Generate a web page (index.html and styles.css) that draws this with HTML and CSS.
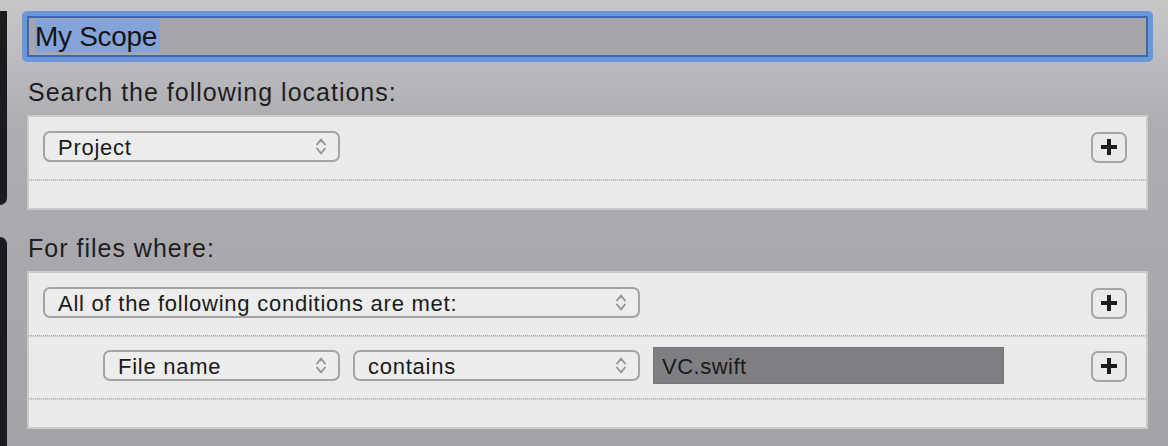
FILE: index.html
```html
<!DOCTYPE html>
<html lang="en">
<head>
<meta charset="utf-8">
<title>Scope</title>
<link rel="stylesheet" href="styles.css">
</head>
<body>
<div class="edge">
  <div class="edge-top"></div>
  <div class="edge-bottom"></div>
</div>
<main class="main">
  <div class="name-field">
    <div class="name-inner"><span class="sel">My Scope</span></div>
  </div>

  <div class="label label-first">Search the following locations:</div>
  <div class="box">
    <div class="row">
      <div class="popup popup-project">
        <span class="popup-text">Project</span>
        <svg class="chev" width="10" height="17" viewBox="0 0 10 17"><path d="M1 6.5 L5 1.6 L9 6.5 M1 10.5 L5 15.4 L9 10.5" fill="none" stroke="#959595" stroke-width="1.9" stroke-linecap="round" stroke-linejoin="round"/></svg>
      </div>
      <div class="spacer"></div>
      <div class="plus"><svg width="16" height="16" viewBox="0 0 16 16"><path d="M8 0V16M0 8H16" stroke="#1d1d1d" stroke-width="4"/></svg></div>
    </div>
    <div class="row-empty"></div>
  </div>

  <div class="label label-second">For files where:</div>
  <div class="box">
    <div class="row">
      <div class="popup popup-all">
        <span class="popup-text">All of the following conditions are met:</span>
        <svg class="chev" width="10" height="17" viewBox="0 0 10 17"><path d="M1 6.5 L5 1.6 L9 6.5 M1 10.5 L5 15.4 L9 10.5" fill="none" stroke="#959595" stroke-width="1.9" stroke-linecap="round" stroke-linejoin="round"/></svg>
      </div>
      <div class="spacer"></div>
      <div class="plus"><svg width="16" height="16" viewBox="0 0 16 16"><path d="M8 0V16M0 8H16" stroke="#1d1d1d" stroke-width="4"/></svg></div>
    </div>
    <div class="row row-indent">
      <div class="popup popup-file">
        <span class="popup-text">File name</span>
        <svg class="chev" width="10" height="17" viewBox="0 0 10 17"><path d="M1 6.5 L5 1.6 L9 6.5 M1 10.5 L5 15.4 L9 10.5" fill="none" stroke="#959595" stroke-width="1.9" stroke-linecap="round" stroke-linejoin="round"/></svg>
      </div>
      <div class="popup popup-contains">
        <span class="popup-text">contains</span>
        <svg class="chev" width="10" height="17" viewBox="0 0 10 17"><path d="M1 6.5 L5 1.6 L9 6.5 M1 10.5 L5 15.4 L9 10.5" fill="none" stroke="#959595" stroke-width="1.9" stroke-linecap="round" stroke-linejoin="round"/></svg>
      </div>
      <div class="text-field">VC.swift</div>
      <div class="spacer"></div>
      <div class="plus"><svg width="16" height="16" viewBox="0 0 16 16"><path d="M8 0V16M0 8H16" stroke="#1d1d1d" stroke-width="4"/></svg></div>
    </div>
    <div class="row-empty"></div>
  </div>
</main>
</body>
</html>
```

FILE: styles.css
```css
html, body {
  margin: 0;
  padding: 0;
  height: 446px;
  overflow: hidden;
}

body {
  display: flex;
  font-family: "Liberation Sans", Arial, sans-serif;
  color: #1c1c1c;
  background: linear-gradient(to bottom, #c7c7c9 0px, #bcbbbf 60px, #aeadb2 120px, #a9a8ad 260px, #a4a3a8 446px);
}

.edge {
  width: 7px;
  flex: none;
  display: flex;
  flex-direction: column;
  padding-top: 11px;
  gap: 32px;
}

.edge-top {
  height: 194px;
  background: #1c1c1e;
  border-bottom-right-radius: 7px;
}

.edge-bottom {
  flex: 1;
  background: #1c1c1e;
  border-top-right-radius: 8px;
}

.main {
  flex: 1;
  padding: 0 15px 0 15px;
  display: flex;
  flex-direction: column;
}

.name-field {
  margin-top: 11px;
  border: 5px solid #6a96da;
  border-radius: 5px;
  box-sizing: border-box;
  height: 51px;
}

.name-inner {
  height: 100%;
  box-sizing: border-box;
  border: 2px solid #3d67b5;
  background: #a6a5aa;
  padding: 1px 0 0 6px;
}

.sel {
  display: inline-block;
  background: #85a3d8;
  font-size: 28px;
  line-height: 31px;
  padding-top: 2px;
  letter-spacing: -0.3px;
  color: #151515;
  padding-right: 3px;
}

.label {
  font-size: 25px;
  line-height: 30px;
  letter-spacing: 1px;
  padding-left: 6px;
  color: #1e1e1e;
  margin-bottom: 8px;
}

.label-first {
  margin-top: 15px;
}

.label-second {
  margin-top: 23px;
}

.box {
  margin-left: 5px;
  margin-right: 5px;
  border: 2px solid #cbcbcc;
  background: #ebebeb;
  display: flex;
  flex-direction: column;
}

.row {
  height: 63px;
  box-sizing: border-box;
  display: flex;
  align-items: center;
  padding: 0 19px 3px 14px;
  gap: 13px;
  border-bottom: 1px dotted #a9a9a9;
  box-shadow: 0 1px 0 #d3d3d3;
}

.row-indent {
  padding-left: 74px;
}

.row-empty {
  height: 28px;
}

.spacer {
  flex: 1;
}

.popup {
  height: 31px;
  box-sizing: border-box;
  border: 2px solid #a4a4a4;
  border-radius: 7px;
  background: #ededed;
  display: flex;
  align-items: center;
  padding: 0 12px 0 13px;
  flex: none;
}

.popup-text {
  flex: 1;
  font-size: 22px;
  line-height: 27px;
  padding-top: 1px;
  letter-spacing: 0.75px;
  color: #1a1a1a;
  white-space: nowrap;
}

.chev {
  flex: none;
  display: block;
}

.popup-project { width: 297px; }
.popup-all { width: 597px; }
.popup-file { width: 237px; }
.popup-contains { width: 287px; }

.text-field {
  width: 351px;
  height: 37px;
  box-sizing: border-box;
  background: #7f7f83;
  border: 1px solid #76767a;
  font-size: 22px;
  line-height: 37px;
  letter-spacing: 0.5px;
  padding-left: 8px;
  color: #1a1a1a;
  flex: none;
}

.plus {
  width: 36px;
  height: 31px;
  box-sizing: border-box;
  border: 2px solid #a6a6a6;
  border-radius: 7px;
  display: flex;
  align-items: center;
  justify-content: center;
  flex: none;
  margin-top: 1px;
}

.plus svg {
  display: block;
}
```
